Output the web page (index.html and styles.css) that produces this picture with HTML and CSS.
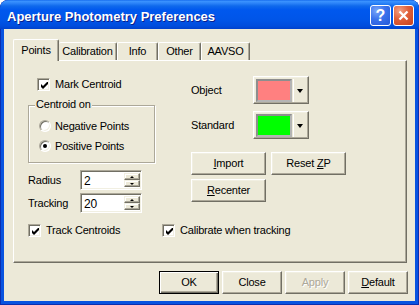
FILE: index.html
```html
<!DOCTYPE html>
<html>
<head>
<meta charset="utf-8">
<link rel="stylesheet" href="styles.css">
</head>
<body>
<div class="window">
  <div class="titlebar">
    <span class="title">Aperture Photometry Preferences</span>
    <div class="caption">
      <div class="cbtn help">?</div>
      <div class="cbtn close"><svg width="13" height="13" viewBox="0 0 13 13"><path d="M2.5 2.5 L10.5 10.5 M10.5 2.5 L2.5 10.5" stroke="#fff" stroke-width="2.3" fill="none"/></svg></div>
    </div>
  </div>
  <div class="client">
    <div class="tabs">
      <div class="tab active t-points">Points</div>
      <div class="tab t-cal after-active">Calibration</div>
      <div class="tab t-info">Info</div>
      <div class="tab t-other">Other</div>
      <div class="tab t-aavso">AAVSO</div>
    </div>
    <div class="panel">
      <div class="cols">
        <div class="left">
          <div class="check-row mark"><span class="cb"><svg width="7" height="7" viewBox="0 0 7 7"><polygon points="0,2 2,4 6,0 7,0 7,2 2,7 0,5" fill="#000"/></svg></span>Mark Centroid</div>
          <div class="group">
            <span class="group-label">Centroid on</span>
            <div class="radio-row"><span class="rb"></span>Negative Points</div>
            <div class="radio-row"><span class="rb on"></span>Positive Points</div>
          </div>
          <div class="spin-row">
            <span class="spin-label">Radius</span>
            <div class="edit"><span class="edit-text">2</span><div class="spinner"><span class="sp up"></span><span class="sp down"></span></div></div>
          </div>
          <div class="spin-row">
            <span class="spin-label">Tracking</span>
            <div class="edit"><span class="edit-text">20</span><div class="spinner"><span class="sp up"></span><span class="sp down"></span></div></div>
          </div>
        </div>
        <div class="right">
          <div class="color-row">
            <span class="color-label">Object</span>
            <div class="colorbtn"><span class="swatch pink"></span><span class="sep"></span><span class="arrow"></span></div>
          </div>
          <div class="color-row">
            <span class="color-label">Standard</span>
            <div class="colorbtn"><span class="swatch green"></span><span class="sep"></span><span class="arrow"></span></div>
          </div>
          <div class="btn-row">
            <button class="btn"><u>I</u>mport</button>
            <button class="btn">Reset <u>Z</u>P</button>
          </div>
          <div class="btn-row">
            <button class="btn"><u>R</u>ecenter</button>
          </div>
        </div>
      </div>
      <div class="bottom-row">
        <div class="check-row first"><span class="cb"><svg width="7" height="7" viewBox="0 0 7 7"><polygon points="0,2 2,4 6,0 7,0 7,2 2,7 0,5" fill="#000"/></svg></span>Track Centroids</div>
        <div class="check-row"><span class="cb"><svg width="7" height="7" viewBox="0 0 7 7"><polygon points="0,2 2,4 6,0 7,0 7,2 2,7 0,5" fill="#000"/></svg></span>Calibrate when tracking</div>
      </div>
    </div>
    <div class="footer">
      <button class="fbtn default-btn">OK</button>
      <button class="fbtn">Close</button>
      <button class="fbtn disabled">Apply</button>
      <button class="fbtn"><u>D</u>efault</button>
    </div>
  </div>
</div>
</body>
</html>
```
FILE: styles.css
```css
* { box-sizing: border-box; }
body {
  margin: 0;
  background: #fff;
  font-family: "Liberation Sans", Arial, sans-serif;
  font-size: 11px;
  line-height: 13px;
  letter-spacing: -0.2px;
  color: #000;
}
.window {
  width: 419px;
  height: 305px;
  display: flex;
  flex-direction: column;
  background: #0853E0;
  border-radius: 8px 8px 0 0;
  box-shadow: inset 1px 0 #0A2EB0, inset -1px 0 #0A2EB0, inset 0 -1px #0A2EB0;
  overflow: hidden;
}
.titlebar {
  height: 29px;
  flex: none;
  display: flex;
  align-items: flex-start;
  padding-left: 7px;
  border-radius: 8px 8px 0 0;
  background: linear-gradient(to bottom, #0A5FE8 0px, #3D95FF 1px, #2E86F9 3px, #0F69EC 6px, #0058EE 10px, #0055E8 20px, #004DDD 26px, #0041CC 29px);
}
.title {
  color: #fff;
  font-weight: bold;
  font-size: 13px;
  line-height: 16px;
  padding-top: 9px;
  letter-spacing: 0;
  text-shadow: 1px 1px #0A1E8C;
  white-space: nowrap;
}
.caption {
  margin-left: auto;
  display: flex;
  gap: 2px;
  padding: 5px 5px 0 0;
}
.cbtn {
  width: 21px;
  height: 21px;
  border: 1px solid #fff;
  border-radius: 3px;
  display: flex;
  align-items: center;
  justify-content: center;
}
.help {
  background: radial-gradient(circle at 30% 25%, #7AA6F8 0%, #3A72EC 45%, #2458D8 100%);
  color: #fff;
  font-weight: bold;
  font-size: 16px;
  letter-spacing: 0;
}
.close {
  background: radial-gradient(circle at 30% 25%, #F2A083 0%, #E0603A 45%, #C8421C 100%);
}
.client {
  flex: 1;
  margin: 0 4px 4px;
  background: #ECE9D8;
  padding: 10px 8px 0 9px;
  display: flex;
  flex-direction: column;
}
.tabs {
  display: flex;
  align-items: flex-end;
  height: 21px;
}
.tab {
  height: 18px;
  display: flex;
  align-items: center;
  justify-content: center;
  background: #ECE9D8;
  border-top: 1px solid #fff;
  border-left: 1px solid #fff;
  border-right: 1px solid #716F64;
  box-shadow: inset -1px 0 #ACA899;
  border-radius: 2px 2px 0 0;
  white-space: nowrap;
}
.tab.active {
  height: 22px;
  margin-bottom: -1px;
  position: relative;
  z-index: 1;
  padding-bottom: 1px;
}
.tab.after-active { border-left: none; }
.t-points { width: 46px; }
.t-cal { width: 58px; }
.t-info { width: 41px; }
.t-other { width: 43px; }
.t-aavso { width: 49px; }
.panel {
  height: 203px;
  flex: none;
  border: 1px solid;
  border-color: #fff #716F64 #716F64 #fff;
  box-shadow: inset -1px -1px #ACA899;
  padding: 15px 0 0 14px;
}
.cols {
  display: flex;
  align-items: flex-start;
}
.left {
  width: 163px;
  flex: none;
}
.check-row {
  display: flex;
  align-items: center;
  height: 13px;
  white-space: nowrap;
}
.cb {
  width: 13px;
  height: 13px;
  flex: none;
  margin-right: 5px;
  background: #fff;
  border: 1px solid;
  border-color: #ACA899 #fff #fff #ACA899;
  box-shadow: inset 1px 1px #716F64, inset -1px -1px #F1EFE2;
  display: flex;
  align-items: center;
  justify-content: center;
}
.cb svg { display: block; margin: 1px 0 0 1px; }
.mark { margin: 2px 0 0 9px; }
.group {
  position: relative;
  width: 127px;
  height: 58px;
  margin-top: 14px;
  border: 1px solid #ACA899;
  box-shadow: inset 1px 1px #fff, 1px 1px #fff;
  padding: 14px 0 0 10px;
  display: flex;
  flex-direction: column;
  gap: 8px;
}
.group-label {
  position: absolute;
  top: -8px;
  left: 6px;
  padding: 0 1px;
  background: #ECE9D8;
  line-height: 13px;
  white-space: nowrap;
}
.radio-row {
  display: flex;
  align-items: center;
  height: 12px;
  white-space: nowrap;
}
.rb {
  width: 12px;
  height: 12px;
  flex: none;
  margin-right: 4px;
  border-radius: 50%;
  background: #fff;
  border: 1px solid;
  border-color: #ACA899 #fff #fff #ACA899;
  box-shadow: inset 1px 1px #716F64, inset -1px -1px #F1EFE2;
  display: flex;
  align-items: center;
  justify-content: center;
}
.rb.on::after {
  content: "";
  width: 4px;
  height: 4px;
  border-radius: 50%;
  background: #000;
}
.spin-row {
  display: flex;
  align-items: center;
  height: 20px;
  margin-top: 7px;
}
.spin-row + .spin-row { margin-top: 3px; }
.spin-label { width: 52px; flex: none; }
.edit {
  width: 62px;
  height: 20px;
  display: flex;
  align-items: stretch;
  padding: 2px 1px 2px 2px;
  background: #fff;
  border: 1px solid;
  border-color: #ACA899 #fff #fff #ACA899;
  box-shadow: inset 1px 1px #716F64, inset -1px -1px #F1EFE2;
}
.edit-text {
  padding-left: 1px;
  line-height: 16px;
  font-size: 12px;
}
.spinner {
  margin-left: auto;
  width: 16px;
  display: flex;
  flex-direction: column;
}
.sp {
  flex: 1;
  background: #ECE9D8;
  border: 1px solid;
  border-color: #F1EFE2 #716F64 #716F64 #F1EFE2;
  box-shadow: inset -1px -1px #ACA899, inset 1px 1px #fff;
  display: flex;
  align-items: center;
  justify-content: center;
}
.sp.up::after {
  content: "";
  border-left: 2px solid transparent;
  border-right: 2px solid transparent;
  border-bottom: 2px solid #000;
}
.sp.down::after {
  content: "";
  border-left: 2px solid transparent;
  border-right: 2px solid transparent;
  border-top: 2px solid #000;
}
.right { flex: 1; }
.color-row {
  display: flex;
  align-items: center;
  height: 28px;
}
.color-row + .color-row { margin-top: 7px; }
.color-label { width: 62px; flex: none; }
.colorbtn {
  width: 56px;
  height: 28px;
  display: flex;
  align-items: flex-start;
  padding: 2px 2px 1px 2px;
  background: #ECE9D8;
  border: 1px solid;
  border-color: #fff #716F64 #716F64 #fff;
  box-shadow: inset -1px -1px #ACA899, inset 1px 1px #F1EFE2;
}
.swatch {
  width: 36px;
  height: 23px;
  flex: none;
  border: 2px solid;
  border-color: #8E8E8E #B4B4B4 #B4B4B4 #8E8E8E;
}
.pink { background: #FF8080; }
.green { background: #00FF00; }
.sep {
  width: 1px;
  align-self: stretch;
  background: #fff;
  margin-left: 1px;
}
.arrow {
  align-self: center;
  margin-left: 3px;
  border-left: 3px solid transparent;
  border-right: 3px solid transparent;
  border-top: 4px solid #000;
}
.btn-row {
  display: flex;
  gap: 5px;
  margin-top: 13px;
}
.btn-row + .btn-row { margin-top: 4px; }
.btn, .fbtn {
  height: 23px;
  padding: 0;
  font: inherit;
  letter-spacing: inherit;
  color: #000;
  background: #ECE9D8;
  border: 1px solid;
  border-color: #fff #716F64 #716F64 #fff;
  box-shadow: inset -1px -1px #ACA899, inset 1px 1px #F1EFE2;
}
.btn { width: 75px; }
.bottom-row {
  display: flex;
  margin-top: 11px;
}
.bottom-row .first { width: 134px; }
.footer {
  display: flex;
  justify-content: flex-end;
  gap: 3px;
  margin-top: 8px;
  margin-right: -1px;
}
.fbtn { width: 60px; }
.fbtn.default-btn {
  border: 1px solid #000;
  box-shadow: inset 1px 1px #fff, inset -1px -1px #716F64, inset -2px -2px #ACA899;
}
.fbtn.disabled {
  color: #ACA899;
  text-shadow: 1px 1px #fff;
}
```
